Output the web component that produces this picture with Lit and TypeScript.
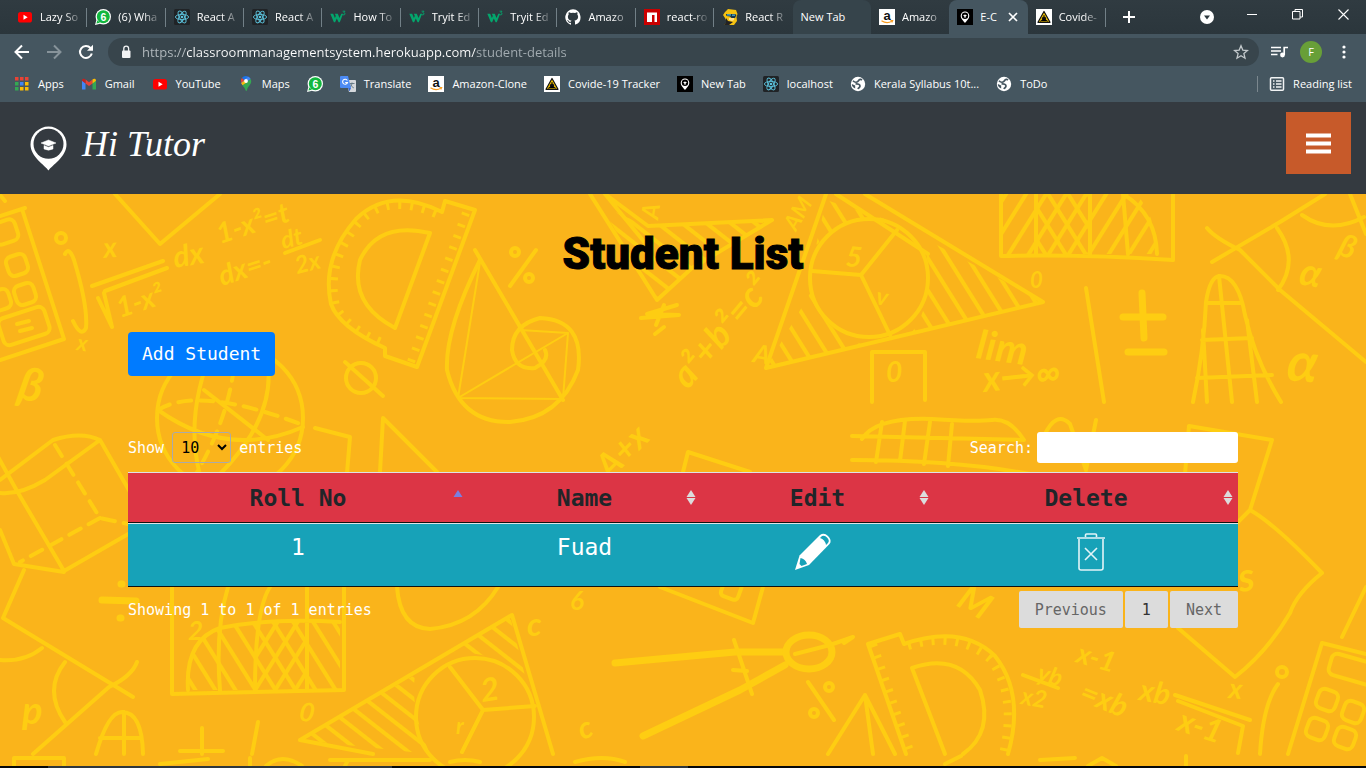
import { LitElement, html, svg, css, nothing } from "lit";
import { customElement, property } from "lit/decorators.js";
import { classMap } from "lit/directives/class-map.js";

const reactIcon = svg`<rect width="16" height="16" rx="1.5" fill="#202326"/>
  <g fill="none" stroke="#5cc3dd" stroke-width=".9"><ellipse cx="8" cy="8" rx="6.6" ry="2.6"/>
  <ellipse cx="8" cy="8" rx="6.6" ry="2.6" transform="rotate(60 8 8)"/><ellipse cx="8" cy="8" rx="6.6" ry="2.6" transform="rotate(120 8 8)"/></g>
  <circle cx="8" cy="8" r="1.3" fill="#5cc3dd"/>`;

const globeIcon = svg`<circle cx="8" cy="8" r="7.2" fill="#fff"/>
  <path d="M3 4.800C5 7 7.500 6.500 8.500 4.800S11 3.200 12 4M5.500 8c2.500-.3 4.500.2 4.500 2s-1.500 1.500-2 3" fill="none" stroke="#455660" stroke-width="1.700"/>
  <path d="M1.800 8l3.400 1.500v3C3 12 1.800 10 1.800 8z" fill="#455660"/>`;

const ICONS: Record<string, unknown> = {
  youtube: svg`<rect x="1" y="3" width="14" height="10.500" rx="2.600" fill="#f00"/><path d="M6.500 5.800v5l4.200-2.500z" fill="#fff"/>`,
  whatsapp: svg`<circle cx="8.300" cy="7.700" r="7.700" fill="#fff"/><path d="M0 16l1.400-5 3.800 3.800z" fill="#fff"/><circle cx="8.300" cy="7.700" r="6.500" fill="#12b73f"/><path d="M1.400 14.600l1-3.400 2.600 2.500z" fill="#12b73f"/>
    <text x="8.300" y="11.500" font-size="10.500" font-weight="700" fill="#fff" text-anchor="middle">6</text>`,
  react: reactIcon,
  w3: svg`<path d="M.3 4.800h2.900l1.700 4.200.9-2-.9-2.200h2.900L9.500 9l1.800-4.200h1.800L9.800 13.300H8.600L6.800 9.500l-1.700 3.800H3.900z" fill="#04a56c"/><path d="M12.600 2.200h2.400l-1.200 1.500c1.600 0 1.700 2.200 0 2.200-.6 0-1.100-.3-1.300-.8" fill="none" stroke="#04a56c" stroke-width=".9"/>`,
  github: svg`<path d="M8 .2a8 8 0 0 0-2.500 15.500c.4 0 .5-.2.5-.4v-1.500c-2.200.5-2.700-1-2.700-1-.4-.9-.9-1.200-.9-1.200-.7-.5.1-.5.1-.5.8.1 1.200.8 1.200.8.700 1.200 1.900.9 2.300.7.100-.5.300-.9.500-1.100-1.800-.2-3.600-.9-3.600-4 0-.8.300-1.600.8-2.100-.1-.2-.4-1 .1-2.100 0 0 .7-.2 2.200.8a7.700 7.700 0 0 1 4 0c1.500-1 2.200-.8 2.200-.8.500 1.100.2 1.900.1 2.100.5.600.8 1.300.8 2.100 0 3.100-1.900 3.800-3.700 4 .3.300.6.800.6 1.500v2.200c0 .2.100.5.500.4A8 8 0 0 0 8 .2z" fill="#fff"/>`,
  npm: svg`<rect width="16" height="16" fill="#cb0000"/><path d="M3 3.500h10v9.500h-2.500V6H8v7H3z" fill="#fff"/>`,
  router: svg`<path d="M3 3l3-3 8 1 1.500 4-1 3 .5 4-3 4H2l3-3-2-4-2-3z" fill="#f5c211"/><path d="M4 5h9l1.500 1-1.500 3H9.500L8 7.500 4.500 7z" fill="#18344a"/><path d="M5 5.800h4M10 6.200h3" stroke="#4db8d8" stroke-width="1.200"/><path d="M4 9l2 3 5 1-4 3H2l2-2.500z" fill="#232323"/><path d="M7 9h5v2l-2 1-3-1z" fill="#ffe08a"/>`,
  amazon: svg`<rect width="16" height="16" fill="#fff"/><text x="8" y="10.500" font-size="13" font-weight="700" fill="#111" text-anchor="middle">a</text><path d="M2.500 11.800q5.500 3.600 10.500.3M11.500 11.500l2.200.1-.9 1.900" fill="none" stroke="#f79a1d" stroke-width="1.100"/>`,
  pin: svg`<rect width="16" height="16" fill="#000"/><path d="M8 14C6.500 11.800 3.700 9.800 3.700 6.700a4.300 4.300 0 0 1 8.600 0C12.300 9.800 9.500 11.800 8 14z" fill="#fff"/><circle cx="8" cy="6.700" r="3.200" fill="#000"/><path d="M6 6.600L8 5.600l2 1-2 1zM7 7.400v.9q1 .6 2 0v-.9" fill="#fff"/>`,
  covid: svg`<rect width="16" height="16" fill="#fff"/><path d="M8 2.500l6 10.800H2z" fill="#f5c400" stroke="#111" stroke-width="1.200" stroke-linejoin="round"/><circle cx="8" cy="9.500" r="2.100" fill="#111"/><path d="M4.300 12.300L8 9.500l3.700 2.800M8 6v3.500" stroke="#111" stroke-width="1"/>`,
  apps: svg`${[0, 1, 2].map((r) => [0, 1, 2].map((c) => svg`<rect x=${1 + c * 5} y=${1 + r * 5} width="3.500" height="3.500" fill=${["#ea4335", "#ea4335", "#ea4335", "#34a853", "#4285f4", "#fbbc04", "#34a853", "#fbbc04", "#fbbc04"][r * 3 + c]}/>`))}`,
  gmail: svg`<path d="M1 13.500V4.500l3.500 2.600v6.400z" fill="#4285f4"/><path d="M11.500 13.500V7.100L15 4.500v9z" fill="#34a853"/><path d="M4.500 3.500L8 6.200l3.500-2.700v3.900L8 10.100 4.500 7.400z" fill="#ea4335"/><path d="M1 4.800C1 2.600 3 2.300 4.500 3.500v3.900L1 4.800z" fill="#c5221f"/><path d="M15 4.800c0-2.200-2-2.500-3.500-1.300v3.900z" fill="#fbbc04"/>`,
  maps: svg`<path d="M8 0a5.200 5.200 0 0 0-4.200 2.100l3 2.600L10 .4A5 5 0 0 0 8 0z" fill="#1a73e8"/><path d="M3.800 2.100A5 5 0 0 0 3.200 7l3.600-2.300z" fill="#ea4335"/><path d="M10 .4a5.200 5.200 0 0 1 2.700 2.500L4.500 9.200 3.200 7z" fill="#4285f4"/><path d="M12.700 2.900c.7 1.500.7 3 0 4.500-1 2.200-3.200 3.600-3.700 6.600-.2.900-1 1.600-1.500 0C7 12 5.500 10.800 4.500 9.200z" fill="#34a853"/><path d="M3.200 7l1.300 2.200L9.800 5.700 7 4.300z" fill="#fbbc04"/><circle cx="8" cy="5" r="1.900" fill="#fff"/>`,
  translate: svg`<path d="M6 4h9q1 0 1 1v10q0 1-1 1H9z" fill="#d5d8dc"/><path d="M9.500 7.500h5M12 6.500v1c-.4 2.200-1.600 3.500-2.800 4.300M10.500 8.500c.6 1.500 2 2.700 3.300 3.400" fill="none" stroke="#5f7480" stroke-width=".9"/><path d="M1 0h7l3 12H1q-1 0-1-1V1q0-1 1-1z" fill="#4c8bf5"/><path d="M7.300 4.500A2.500 2.500 0 1 0 7.500 6.500H5.200" fill="none" stroke="#fff" stroke-width="1.100"/><path d="M8 12h3l-1.500 3.500z" fill="#3367d6"/>`,
  globe: globeIcon,
  list: svg`<g fill="none" stroke="#f1f3f4" stroke-width="1.500"><rect x="1.500" y="1.800" width="13" height="12.500" rx="1"/><path d="M4 5h1.500M7 5h5.500M4 8h1.500M7 8h5.500M4 11h1.500M7 11h5.500"/></g>`,
};

@customElement("app-icon")
class AppIcon extends LitElement {
  @property() name = "";
  static styles = css`
    :host { display: block; width: 16px; height: 16px; flex: none; font-family: "Liberation Sans", Arial, sans-serif; }
    svg { display: block; width: 16px; height: 16px; }
  `;
  render() {
    return html`<svg viewBox="0 0 16 16" aria-hidden="true">${ICONS[this.name]}</svg>`;
  }
}

interface Tab { icon?: string; title: string; state?: string; line?: boolean; }

const TABS: Tab[] = [
  { icon: "youtube", title: "Lazy So", line: true },
  { icon: "whatsapp", title: "(6) Wha", line: true },
  { icon: "react", title: "React A", line: true },
  { icon: "react", title: "React A", line: true },
  { icon: "w3", title: "How To", line: true },
  { icon: "w3", title: "Tryit Ed", line: true },
  { icon: "w3", title: "Tryit Ed", line: true },
  { icon: "github", title: "Amazo", line: true },
  { icon: "npm", title: "react-ro", line: true },
  { icon: "router", title: "React R" },
  { title: "New Tab", state: "hover" },
  { icon: "amazon", title: "Amazo" },
  { icon: "pin", title: "E-C", state: "active" },
  { icon: "covid", title: "Covide-", line: true },
];

const BOOKMARKS = [
  ["apps", "Apps"], ["gmail", "Gmail"], ["youtube", "YouTube"], ["maps", "Maps"], ["whatsapp", ""],
  ["translate", "Translate"], ["amazon", "Amazon-Clone"], ["covid", "Covide-19 Tracker"], ["pin", "New Tab"],
  ["react", "localhost"], ["globe", "Kerala Syllabus 10t..."], ["globe", "ToDo"],
];

@customElement("browser-bar")
class BrowserBar extends LitElement {
  static styles = css`
    :host { display: block; font: 500 11px/16px "Open Sans", "Noto Sans", sans-serif; color: #fff; background: #455660; }
    button, input { font: inherit; color: inherit; border: 0; padding: 0; background: none; }
    svg { display: block; }
    .strip { display: flex; height: 34px; padding-left: 9px; background: linear-gradient(#303b41, #2b363c); }
    .tabs { display: grid; grid-auto-flow: column; grid-auto-columns: minmax(0, 1fr); flex: 1; min-width: 0; }
    .tab { position: relative; display: flex; min-width: 0; align-items: center; gap: 7px; padding: 0 3px 0 8px; text-align: left; border-radius: 8px 8px 0 0; }
    .tab.line::after { content: ""; position: absolute; right: 0; top: 8px; width: 1px; height: 19px; background: #728087; }
    .tab.hover { background: #36444b; }
    .tab.active { padding-right: 10px; background: #455660; }
    .title { flex: 1; min-width: 0; white-space: nowrap; mask-image: linear-gradient(90deg, #000 55%, transparent 98%); }
    .hover .title, .active .title { mask-image: none; }
    .window { display: grid; grid-template-columns: 46px 1fr 44px 46px 46px; align-items: center; justify-items: center; width: 260px; }
    .search { justify-self: end; margin-right: 16px; }
    .controls { align-self: start; height: 28px; display: grid; place-items: center; }
    .bar { display: flex; align-items: center; gap: 12px; height: 34px; padding: 2px 12px 0 12px; box-sizing: border-box; }
    .nav { display: flex; gap: 12px; }
    .address { display: flex; flex: 1; align-items: center; gap: 8px; height: 28px; padding: 0 10px; border-radius: 14px; background: #38454c; font-size: 13px; line-height: 20px; }
    .address input { flex: 1; min-width: 0; outline: 0; color: transparent; background: linear-gradient(90deg, #b5bcc0 44px, #fff 44px, #fff 334px, #a4adb2 334px); background-clip: text; -webkit-background-clip: text; }
    .tools { display: flex; align-items: center; gap: 12px; }
    .avatar { width: 22px; height: 22px; border-radius: 50%; background: #689f38; text-align: center; line-height: 22px; }
    .marks { display: flex; align-items: center; gap: 17px; height: 34px; padding: 0 14px 2px; box-sizing: border-box; }
    .marks a { display: flex; align-items: center; gap: 8px; color: inherit; text-decoration: none; white-space: nowrap; }
    .marks .reading { margin-left: auto; padding-left: 11px; border-left: 1px solid #7b878e; }
  `;

  tab(t: Tab) {
    return html`<button role="tab" class=${classMap({ tab: true, line: !!t.line, hover: t.state === "hover", active: t.state === "active" })}>
      ${t.icon ? html`<app-icon name=${t.icon}></app-icon>` : nothing}
      <span class="title">${t.title}</span>
      ${t.state === "active" ? html`<svg width="10" height="10" viewBox="0 0 10 10"><path d="M1 1l8 8M9 1l-8 8" stroke="#fff" stroke-width="1.700"/></svg>` : nothing}
    </button>`;
  }

  render() {
    return html`
      <div class="strip">
        <div class="tabs" role="tablist">${TABS.map((t) => this.tab(t))}</div>
        <div class="window">
          <button aria-label="New tab"><svg width="14" height="14" viewBox="0 0 14 14"><path d="M7 1v12M1 7h12" stroke="#fff" stroke-width="2"/></svg></button>
          <button class="search" aria-label="Search tabs"><svg width="14" height="14" viewBox="0 0 14 14"><circle cx="7" cy="7" r="7" fill="#fff"/><path d="M4 5.500h6L7 9.500z" fill="#2d383e"/></svg></button>
          <button class="controls" aria-label="Minimize"><svg width="10" height="10" viewBox="0 0 10 10"><path d="M0 5.500h10" stroke="#fff"/></svg></button>
          <button class="controls" aria-label="Restore"><svg width="11" height="11" viewBox="0 0 11 11"><path d="M.5 2.500h7.500v7.500H.5zM3 2.500V.500h7.500V8H8" fill="none" stroke="#fff"/></svg></button>
          <button class="controls" aria-label="Close"><svg width="11" height="11" viewBox="0 0 11 11"><path d="M.5.5l10 10M10.500.5l-10 10" stroke="#fff" stroke-width="1.100"/></svg></button>
        </div>
      </div>
      <div class="bar">
        <div class="nav">
          <button aria-label="Back"><svg width="20" height="20" viewBox="0 0 20 20"><path d="M17 10H4M10 3.500L3.500 10l6.500 6.500" fill="none" stroke="#fff" stroke-width="2"/></svg></button>
          <button aria-label="Forward"><svg width="20" height="20" viewBox="0 0 20 20"><path d="M3 10h13M10 3.500l6.500 6.500-6.500 6.500" fill="none" stroke="#87939a" stroke-width="2"/></svg></button>
          <button aria-label="Reload"><svg width="20" height="20" viewBox="0 0 20 20"><path d="M15.800 11.500A6 6 0 1 1 14.500 6L16 7.500" fill="none" stroke="#fff" stroke-width="2"/><path d="M17 2.800v6h-6z" fill="#fff"/></svg></button>
        </div>
        <div class="address">
          <svg width="16" height="16" viewBox="0 0 16 16"><rect x="4" y="6.500" width="8.500" height="7.500" rx="1" fill="#f1f3f4"/><path d="M5.800 7V4.500a2.400 2.400 0 0 1 4.800 0V7" fill="none" stroke="#f1f3f4" stroke-width="1.300"/></svg>
          <input aria-label="Address" value="https://classroommanagementsystem.herokuapp.com/student-details" />
          <button aria-label="Bookmark"><svg width="16" height="16" viewBox="0 0 16 16"><path d="M8 1.800l1.800 4.300 4.700.4-3.600 3.100 1.100 4.600L8 11.700l-4 2.500 1.100-4.600L1.500 6.500l4.700-.4z" fill="none" stroke="#c3c9cc" stroke-width="1.300"/></svg></button>
        </div>
        <div class="tools">
          <button aria-label="Media"><svg width="17" height="16" viewBox="0 0 17 16"><path d="M0 3.500h10M0 7h10M0 10.500h6.500M13.200 11V3.500H17" fill="none" stroke="#fff" stroke-width="1.700"/><circle cx="11.500" cy="11" r="2.400" fill="#fff"/></svg></button>
          <button class="avatar" aria-label="Profile">F</button>
          <button aria-label="Menu"><svg width="20" height="16" viewBox="0 0 20 16" fill="#fff"><circle cx="10" cy="3" r="1.600"/><circle cx="10" cy="8" r="1.600"/><circle cx="10" cy="13" r="1.600"/></svg></button>
        </div>
      </div>
      <nav class="marks">
        ${BOOKMARKS.map(([icon, text]) => html`<a href="#"><app-icon name=${icon}></app-icon>${text ? html`<span>${text}</span>` : nothing}</a>`)}
        <a class="reading" href="#"><app-icon name="list"></app-icon><span>Reading list</span></a>
      </nav>`;
  }
}

const note = (x: number, y: number, r: number, size: number, t: string) =>
  svg`<text x=${x} y=${y} font-size=${size} transform=${`rotate(${r} ${x} ${y})`}>${t}</text>`;

const key = (x: number, y: number, r: number, w = 20, h = 20) =>
  svg`<rect x=${x - w / 2} y=${y - h / 2} width=${w} height=${h} rx="6" transform=${`rotate(${r} ${x} ${y})`}/>`;

@customElement("math-doodles")
class MathDoodles extends LitElement {
  static styles = css`
    :host { display: block; overflow: hidden; }
    svg { display: block; width: 100%; height: 100%; }
    .ink { fill: none; stroke: #fecd12; stroke-width: 4px; stroke-linecap: round; stroke-linejoin: round; }
    .thin { stroke-width: 2px; }
    .bold { stroke-width: 7px; }
    .dash { stroke-dasharray: 13 9; }
    .tick { stroke-width: 8px; stroke-dasharray: 3 9; stroke-linecap: butt; }
    .notes { fill: #fecd12; font-family: Lato, sans-serif; font-style: italic; font-weight: 700; }
  `;
  render() {
    return html`<svg viewBox="0 194 1366 572" preserveAspectRatio="xMidYMin slice" aria-hidden="true">
      <defs>
        <pattern id="fwd" width="17" height="17" patternUnits="userSpaceOnUse" patternTransform="rotate(32)"><path d="M4 0V17" stroke="#fecd12" stroke-width="4"/></pattern>
        <pattern id="back" width="17" height="17" patternUnits="userSpaceOnUse" patternTransform="rotate(-32)"><path d="M4 0V17" stroke="#fecd12" stroke-width="4"/></pattern>
        <pattern id="steep" width="15" height="15" patternUnits="userSpaceOnUse" patternTransform="rotate(-52)"><path d="M4 0V15" stroke="#fecd12" stroke-width="4"/></pattern>
      </defs>
      <g class="ink">
        <path d="M0 195l5 6M0 216l25-8M22 209l42 130L0 360M115 194l45 50 60-50"/>
        ${key(5, 232, -18, 24, 22)}${key(17, 265, -18)}${key(25, 294, -18)}${key(0, 300, -18)}${key(24, 326, -18, 48, 28)}
        <path d="M17 324l12-3M20 331l12-3"/>
        <circle cx="61" cy="238" r="5"/><path d="M65 254q4-8 9 6 14 46 12 68-5 10-13-7M92 286l71-25M105 291l62-23M98 298l14 29-8-34"/>
        <path d="M285 253l35-13"/>
        <path d="M442 212q-52-26-86 7-35 40-25 85 8 23 54 44v8l32 11 58-157-30-9z"/>
        <path class="tick" d="M436 214q-50-22-78 10-32 40-22 82 10 22 50 38M411 362l56-152"/>
        <path d="M430 233l-35 95q-46-24-35-68 18-39 70-27z"/>
        <circle cx="361" cy="378" r="15"/><path d="M345 362l38 34"/>
        <circle cx="230" cy="418" r="73"/><path d="M264 345q20 65-45 130M158 410q70 50 145 17M214 345q-30 70-14 130M204 390l64 50"/>
        <path class="dash" d="M158 410q40-25 145 15M236 346q-3 65-40 128"/>
        <path d="M0 480l53-40q28-9 47 0l30 52M0 493q20 2 45-13l55-40M17 491l47 80 66-38M17 491l-20-36M0 530l14 34 50 8M24 570L3 618l130 79M137 662q-5 14-28 25l-76 67"/>
        <path class="dash" d="M55 445l45 73 28 6M100 518l-80 44"/>
        <path d="M0 660q25 2 42-12M65 662q-22 28 0 60"/>
        <path class="bold" d="M102 600l34 1M121 584h1M120 618h1"/>
        <path d="M315 428l35 9-3 36M380 472l3-54 54 54M397 587q3 41 33 42 45-4 68-42"/>
        <path d="M172 587v107l172-4V587M188 690q-3-50 32-62 50-10 120-6M228 587q-13 43-8 103M255 690q0-80 15-103M307 587v103"/>
        <path fill="url(#back)" stroke="none" d="M188 690q-3-50 32-62 50-10 120-6v68z"/><path fill="url(#fwd)" stroke="none" d="M257 622h50v68h-50z"/>
        <path d="M96 754q12-42 26-42 20 0 21 42M124 712v42M100 738h40M202 728v26M180 751h43M258 722l-6 32"/>
        <path d="M373 754l-73-14 212-125 41 139"/><circle cx="475" cy="717" r="59"/>
        <path d="M483 710l-33-43M483 710l52-4M483 710l-21 42"/>
        <path fill="url(#steep)" stroke="none" d="M300 740l115-65q-5 35 15 79zM450 652l60-36 15 60q-20-23-75-24z"/>
        <path class="bold" d="M615 663l120-11h50M643 736l97-46 45-25"/><ellipse class="bold" cx="809" cy="652" rx="23" ry="17"/>
        <path d="M795 654l35-9 23-8-9 6M734 640l18 54M733 670l14 1M808 682l26 38"/><circle cx="829" cy="687" r="4"/><circle cx="814" cy="713" r="4"/>
        <path d="M868 644l32-10 4 10q58-20 91 12 30 38 13 98M868 644l38 110M828 754l37-59 30 59M865 695l8 59"/>
        <path class="tick" d="M873 644l38 110M908 646q50-15 82 13 27 36 13 95"/>
        <path d="M912 668l33 86M912 668q46-16 68 22 14 42-17 64"/>
        <path d="M1023 675l35 13M1175 695l75 25M1178 701l65 25-5 27M1260 754q3-50 18-70"/><circle cx="1282" cy="672" r="5"/>
        <path d="M1288 754l34-111 44 11M1342 637l24-50"/>${key(1362, 672, 16, 66, 22)}${key(1327, 700, 20)}${key(1353, 712, 20)}${key(1317, 729, 20)}${key(1345, 738, 20)}
        <path d="M1185 474l4-48 83 14-22 70q25 14 72 63-25 20-32 40-22 38-55 64l-57-49M1250 510l-14 14"/>
        <path d="M590 194l67 106 35-32 80-48-124 6-43-32M605 194l45 55"/>
        <path fill="url(#steep)" stroke="none" d="M600 205l48 22 120-5-76 46-35 30z"/>
        <path d="M826 194l-60 174 277-66-178-108M836 194l92 60"/><circle cx="869" cy="278" r="59"/><path d="M861 275l-49-4M861 275l36-45M861 275l29 60"/>
        <path fill="url(#back)" stroke="none" d="M922 237l121 65-133 33q30-40 12-98zM812 290l-46 78 95-24q-40-14-49-54zM826 200l62 20q-50-5-72 26z"/>
        <path d="M475 250l88 150M480 260q-35 70-33 110 13 53 63 52 50-4 68-52 7-50-38-52-28 7-28 32 3 20 23 18 15-8 10-18"/>
        <path class="thin" d="M480 262l-22 136 110-65-5 66-105-1M520 330l48 3"/>
        <path d="M536 250l-26 36"/><circle cx="515" cy="252" r="4"/><circle cx="529" cy="278" r="4"/>
        <path d="M641 318l38-3-32-1 30-9M656 325l8-20M655 334l9-7"/>
        <path d="M872 402v-50h53v48M1001 194v62q80-2 172 4v-66M1036 194v60M1090 194v60M1123 194l5 60M1123 194q33 20 34 60"/>
        <path fill="url(#fwd)" stroke="none" d="M1001 194h135q20 20 20 60h-155z"/><path fill="url(#back)" stroke="none" d="M1036 194h54v60h-54z"/>
        <path d="M1086 288l18 114"/><path class="bold" d="M1142 293l2 45M1123 317h40M1128 352h36"/>
        <path d="M1193 402q11-52 13-100 4-26 14-26 18 0 25 39 10 45 36 87M1219 276l13 126M1206 303h34M1202 340l50-2M1197 378l75-3M1203 330l4 72M1247 320l10 82"/>
        <path d="M1212 262l68-40 45-28M1207 228q8 10 33 22l40 40 86 72M1277 228q23 32 1 62M1302 215q28 20 62 2M1350 194l16 40"/>
        <path d="M852 460q110 0 188 16M852 436l172 4q-14-22-32-20t-60-1q-56-2-70 20M882 422l-6 40M905 421l-5 40M930 422l-6 42M952 424l-4 42M1044 436q12-26 26-12l16 46M1096 420l-10 50"/>
        <path d="M683 472l5-20 62 20M660 587l93 36 10-36"/><rect x="722" y="580" width="18" height="18" rx="4" transform="rotate(20 730 590)"/>
        <path d="M14 766v-8h50v8M160 764l48-5M250 758v8M266 766q16-14 36 0M330 760h100M345 766l3-6M450 762q15-4 30 0M575 762q28-8 50 0M945 764l16-8M1040 760l35-2M1088 766l14-8 14 8M1186 756v10"/>
      </g>
      <g class="notes">
        ${note(104, 258, -5, 28, "x")}${note(120, 318, -18, 28, "1-x²")}${note(175, 268, -10, 30, "dx")}
        ${note(220, 244, -18, 28, "1-x²=t")}${note(222, 286, -18, 28, "dx=-")}${note(283, 249, -14, 24, "dt")}${note(297, 274, -14, 24, "2x")}
        ${note(76, 350, 8, 22, "x")}${note(16, 398, 12, 46, "β")}${note(658, 220, -82, 24, "A")}${note(796, 232, -60, 22, "AM")}
        ${note(688, 390, -50, 36, "a²+b²=c²")}${note(752, 362, 10, 26, "A")}
        ${note(845, 266, 5, 28, "5")}${note(875, 304, 10, 24, "v")}${note(886, 382, 0, 28, "0")}
        ${note(975, 358, 8, 40, "lim")}${note(984, 392, -6, 36, "x→∞")}${note(1336, 254, 20, 32, "β")}${note(1298, 284, 10, 38, "α")}${note(1286, 380, 5, 54, "α")}
        ${note(1030, 288, 0, 22, "0")}${note(610, 480, -45, 34, "A+x")}${note(22, 724, 0, 38, "p")}${note(298, 720, 10, 26, "0")}
        ${note(482, 702, -8, 32, "2")}${note(456, 734, 0, 22, "r")}${note(570, 610, 0, 26, "6")}${note(527, 636, 0, 32, "c")}
        ${note(582, 740, -20, 30, "c")}${note(955, 605, 30, 36, "M")}${note(1240, 592, -8, 40, "s")}
        ${note(1075, 662, 16, 28, "x-1")}${note(1036, 680, 16, 24, "yb")}${note(1020, 704, 10, 24, "x2")}${note(1078, 700, 22, 30, "=xb")}
        ${note(1138, 700, 10, 30, "xb")}${note(1176, 730, 18, 32, "x-1")}${note(1228, 698, 5, 28, "x")}${note(188, 640, 0, 26, "2")}
      </g>
    </svg>`;
  }
}

@customElement("app-root")
class AppRoot extends LitElement {
  static styles = css`
    :host { display: flex; flex-direction: column; min-height: 100vh; font: 15px/24px "DejaVu Sans Mono", monospace; color: #fff; background: #fab41b; }
    button, input, select { font: inherit; margin: 0; box-sizing: border-box; }
    svg { display: block; }
    .header { display: flex; justify-content: space-between; align-items: flex-start; height: 92px; padding: 10px 15px 0 29px; box-sizing: border-box; background: #343a40; }
    .brand { display: flex; gap: 14px; padding-top: 12px; color: #fff; text-decoration: none; font: italic 36px/40px "Liberation Serif", serif; }
    .menu { display: grid; place-items: center; width: 65px; height: 62px; border: 0; padding: 0; background: #c75a2a; }
    .page { position: relative; z-index: 0; flex: 1; }
    .doodles { position: absolute; inset: 0; z-index: -1; }
    .container { max-width: 1140px; margin: 0 auto; padding: 0 15px; box-sizing: border-box; }
    h1 { margin: 0; padding-top: 28px; color: #000; text-align: center; font: 900 44px/64px Impact, Roboto, sans-serif; -webkit-text-stroke: 1px #000; }
    .add { margin-top: 46px; height: 44px; padding: 0 14px; border: 0; border-radius: 4px; color: #fff; background: #007bff; font-size: 18px; }
    .filters, .footer { display: flex; justify-content: space-between; align-items: center; }
    .filters { margin-top: 56px; }
    .filters label { display: flex; align-items: center; gap: 8px; }
    .filters .search { gap: 4px; }
    select { width: 59px; height: 31px; padding: 0 4px; border: 1px solid #aaa; border-radius: 3px; color: #000; background: transparent; }
    input { width: 201px; height: 31px; border: 0; border-radius: 3px; background: #fff; }
    table { width: 100%; margin-top: 9px; border-collapse: separate; border-spacing: 0; table-layout: fixed; font-size: 23px; line-height: 30px; text-align: center; border-bottom: 1px solid #111; }
    .roll { width: 340px; }
    .mid { width: 233px; }
    th { padding: 0; background: #dc3545; color: #212529; border-top: 1px solid #dee2e6; border-bottom: 1px solid #111; }
    th button { position: relative; display: block; width: 100%; height: 49px; padding: 0; border: 0; color: inherit; background: none; font-weight: 700; }
    .sort { position: absolute; right: 5px; top: 16px; }
    td { height: 63px; padding: 8px 0 0; box-sizing: border-box; vertical-align: top; background: #17a2b8; border-top: 1px solid #dee2e6; }
    td button { display: inline-block; padding: 0; border: 0; background: none; }
    .footer { margin-top: 4px; }
    .pages { display: flex; gap: 2px; }
    .pages button { min-width: 43px; height: 37px; padding: 0 16px; border: 0; border-radius: 2px; color: #666; background: #dcdcdc; font-size: 15px; }
    .pages .current { color: #333; }
    .taskbar { height: 2px; background: linear-gradient(90deg, #05080a 48px, #2f363c 48px 392px, #05080a 392px 640px, #2f363c 640px 688px, #05080a 688px); }
  `;

  heading(text: string, cls: string, sorted = false) {
    return html`<th class=${cls}><button>${text}
      <svg class="sort" width="10" height="18" viewBox="0 0 10 18"><path d="M5 1l4.500 7h-9z" fill=${sorted ? "#7a7fe0" : "#dcdcdc"}/>${sorted ? nothing : svg`<path d="M5 16L.5 9h9z" fill="#dcdcdc"/>`}</svg>
    </button></th>`;
  }

  render() {
    return html`
      <browser-bar></browser-bar>
      <header class="header">
        <a class="brand" href="#">
          <svg width="39" height="48" viewBox="0 0 39 48"><path d="M19.500 46.500C16 41 1.500 33 1.500 20.500a18 18 0 0 1 36 0C37.500 33 23 41 19.500 46.500z" fill="#fff"/><circle cx="19.500" cy="19.800" r="15" fill="#343a40"/><path d="M12 19l7.500-3 7.500 3-7.500 3zM15 21.500l4.500 1.800 4.500-1.800v3.500q-4.500 2.300-9 0z" fill="#fff" stroke="#fff" stroke-width=".5"/></svg>
          <span>Hi Tutor</span>
        </a>
        <button class="menu" aria-label="Menu"><svg width="25" height="21" viewBox="0 0 25 21"><path d="M0 2.500h25M0 10.500h25M0 18.500h25" stroke="#fff" stroke-width="4"/></svg></button>
      </header>
      <main class="page">
        <math-doodles class="doodles"></math-doodles>
        <div class="container">
          <h1>Student List</h1>
          <button class="add">Add Student</button>
          <div class="filters">
            <label>Show <select><option>10</option><option>25</option></select> entries</label>
            <label class="search">Search:<input type="search" /></label>
          </div>
          <table>
            <thead><tr>${this.heading("Roll No", "roll", true)}${this.heading("Name", "mid")}${this.heading("Edit", "mid")}${this.heading("Delete", "")}</tr></thead>
            <tbody><tr>
              <td>1</td><td>Fuad</td>
              <td><button aria-label="Edit"><svg width="46" height="40" viewBox="0 0 46 40"><path d="M0 38L4.500 23.500 25 3q4-3 8 1 4.500 4.500 1.500 8L14 33z" fill="#fff"/><path d="M25 6l2-2q3-1 5 1.500 3 3 1 5.500l-2 2q-1-5.500-6-7zM5.500 26q5 1 6.500 6l-5.500 2-2-2z" fill="#17a2b8"/></svg></button></td>
              <td><button aria-label="Delete"><svg width="40" height="40" viewBox="0 0 40 40"><path d="M11 6h28M19.500 5V3q0-1 1-1h9q1 0 1 1v2M13 7v29q0 2 2 2h20q2 0 2-2V7M19 16l12 12M31 16l-12 12" fill="none" stroke="#e3f4f7" stroke-width="1.600"/></svg></button></td>
            </tr></tbody>
          </table>
          <div class="footer">
            <span>Showing 1 to 1 of 1 entries</span>
            <div class="pages"><button>Previous</button><button class="current">1</button><button>Next</button></div>
          </div>
        </div>
      </main>
      <div class="taskbar"></div>`;
  }
}
